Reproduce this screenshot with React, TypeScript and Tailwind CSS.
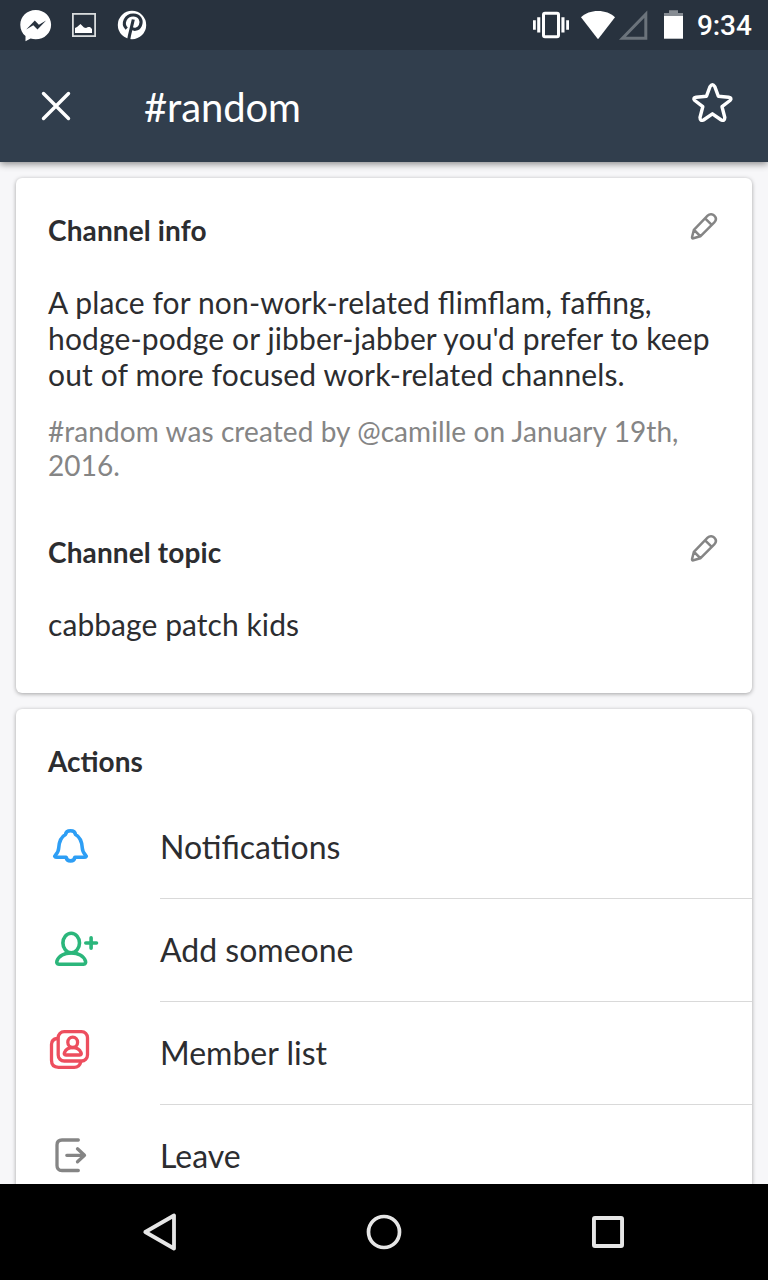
import type { ReactNode } from "react";

function StatusBar() {
  return (
    <div className="relative z-20 flex h-[50px] shrink-0 items-center bg-[#28323e] text-white">
      <svg className="h-[50px] w-[160px]" viewBox="0 0 160 50">
        <path
          fill="#fff"
          d="M35.7 10C27 10 20.3 16.4 20.3 24.7c0 4.800 2 8.700 5.200 11.400V41.300l5.100-2.700c1.600.4 3.300.7 5.100.7 8.700 0 15.400-6.400 15.400-14.600S44.400 10 35.700 10z"
        />
        <path fill="#28323e" d="M26.200 29.500l8.600-9 4.100 4.200 7.200-4.200-8.600 9-4.200-4.200z" />
        <rect x="72.900" y="13.900" width="22.200" height="22.200" fill="none" stroke="#d8dbdc" strokeWidth="1.800" />
        <path fill="#fff" d="M75 33v-5l2-1 3.500-3 3.500 3.500 2 .5 2-1h2l2 2v4z" />
        <circle cx="132" cy="25" r="14.200" fill="#fff" />
        <path
          fill="none"
          stroke="#28323e"
          strokeWidth="3.100"
          strokeLinecap="butt"
          d="M126.700 28.700c-5.200-5.100-1-13.700 6.600-13.700 6.400 0 9.200 5.500 7 10.700-2 4.500-7.500 4.600-9.200 1.700M133.300 19.500l-3.900 16.200-.7 4"
        />
      </svg>
      <svg className="ml-[370px] h-[50px] w-[160px]" viewBox="530 0 160 50">
        <rect x="543.500" y="13.200" width="15" height="23.600" rx="1.500" fill="none" stroke="#fff" strokeWidth="3" />
        <path fill="#fff" d="M537.200 17.300h3.100v15.300h-3.100zM533 20.200h2.800v9.500H533zM561.400 17.300h3.100v15.300h-3.100zM566.200 20.200h2.800v9.500h-2.800z" />
        <path fill="#fff" d="M598 39.300L581 17.300C585.500 13.200 591 11 598 11s12.500 2.200 17 6.300z" />
        <path fill="none" stroke="#6b737b" strokeWidth="3" d="M622.500 38.200h23.300V14.300z" />
        <path fill="#868c93" d="M664 16v-3h5v-2.700h9V13h5v3z" />
        <path fill="#fff" d="M664 16h19v22.700h-19z" />
      </svg>
      <span className="ml-[7px] translate-y-px font-[Roboto,sans-serif] text-[28px] leading-8 font-medium tracking-[-0.1px] whitespace-nowrap">
        9:34
      </span>
    </div>
  );
}

function Header() {
  return (
    <header className="z-10 flex h-28 shrink-0 items-center bg-[#313e4d] text-white shadow-[0_2px_7px_rgba(0,0,0,0.45)]">
      <svg className="ml-8 h-28 w-12" viewBox="32 50 48 112" fill="none" stroke="#fff" strokeWidth="3.400" strokeLinecap="round">
        <path d="M43.500 93.500l25 25M68.500 93.500l-25 25" />
      </svg>
      <h1 className="ml-16 translate-y-px text-[40px] leading-[48px] tracking-[-0.12px] whitespace-nowrap">#random</h1>
      <svg className="mr-8 ml-auto h-28 w-12" viewBox="688 50 48 112" fill="none" stroke="#fff" strokeWidth="3.400" strokeLinejoin="round">
        <path d="M710 86.600q2.400-3.700 4.800 0l3.500 9.600 10.300 1q3.900.8 1.400 3.300l-8 6.200 2.800 10.800q-.1 3.900-3.500 2.500l-8.900-6.200-8.900 6.200q-3.400 1.400-3.500-2.500l2.800-10.800-8-6.200q-2.500-2.500 1.400-3.300l10.300-1z" />
      </svg>
    </header>
  );
}

function Pencil() {
  return (
    <svg className="mr-8 h-8 w-8 -translate-y-1" viewBox="0 0 32 32" fill="none" stroke="#858585" strokeWidth="2.500" strokeLinecap="round" strokeLinejoin="round">
      <path d="M5.900 19.800L19.600 5.700c2.400-2.400 5-1.700 6.700 0 1.700 1.700 2.300 4.300 0 6.700L12.300 26.300l-6.900 2c-1.100.3-1.600-.3-1.300-1.400zM6.100 20l6.200 6.200M17.100 8.300l6.600 6.600" />
    </svg>
  );
}

function SectionHeading({ children, className = "" }: { children: ReactNode; className?: string }) {
  return (
    <div className={"flex h-[34px] items-center justify-between " + className}>
      <h2 className="text-[28px] leading-[34px] font-bold tracking-[0.12px] [font-feature-settings:'liga'_1]">{children}</h2>
      <Pencil />
    </div>
  );
}

const bell = (
  <g stroke="#2d9ef5">
    <path d="M65.500 834.500c.7-5 9.300-5 10 0 5 2.700 6.400 7.200 6.800 13.500.2 3.500 1.200 5 3 6.700 1.600 1.600.9 2.500-1.300 2.500H74.800c-.5 4.900-8 4.900-8.600 0h-9.200c-2.200 0-2.900-.9-1.300-2.500 1.800-1.700 2.800-3.200 3-6.700.4-6.300 1.800-10.800 6.800-13.500z" />
  </g>
);

const addPerson = (
  <g stroke="#2bb67b">
    <ellipse cx="71.200" cy="943" rx="8.300" ry="9.800" />
    <path d="M58.900 964.200h24.600c1.900 0 2.500-1.600 1.900-3.400-1.800-4.800-7.400-7.900-14.200-7.900s-12.400 3.100-14.200 7.900c-.6 1.800 0 3.400 1.900 3.400zM85.800 943h10.700M91.100 937.700v10.600" />
  </g>
);

const members = (
  <g stroke="#ed4e5e" strokeWidth="3.300">
    <rect x="58.200" y="1031.700" width="29.300" height="29.300" rx="6" />
    <path d="M57 1038.500c-3.600.5-5.500 2.500-5.500 6v15.800c0 4.400 2.600 7 7 7h15.700c3.500 0 5.700-1.700 6.600-5.500" />
    <ellipse cx="72.700" cy="1042.300" rx="4.900" ry="5.200" />
    <path d="M66 1055h13.600c1.800 0 2-1.200 1.400-2.400-1.300-3-4.600-4.900-8.300-4.900s-7 1.900-8.200 4.900c-.6 1.200-.3 2.400 1.500 2.400z" />
  </g>
);

const leave = (
  <g stroke="#858585" strokeWidth="3.300">
    <path d="M78.300 1140H62q-5 0-5 5v20.500q0 5 5 5h16.300M66.800 1155.300h17.500M77.500 1148.800l7 6.500-7 6.500" />
  </g>
);

const actions = [
  { label: "Notifications", icon: bell, viewBox: "48 796 64 102" },
  { label: "Add someone", icon: addPerson, viewBox: "48 899 64 102" },
  { label: "Member list", icon: members, viewBox: "48 1002 64 102" },
  { label: "Leave", icon: leave, viewBox: "48 1105 64 102" },
];

function NavBar() {
  return (
    <nav className="flex h-24 shrink-0 items-center justify-between bg-black px-[136px]">
      <svg className="size-12" viewBox="0 0 48 48" fill="none" stroke="#e6e6e6" strokeWidth="3.800" strokeLinejoin="round">
        <path d="M9.300 24L38 7.500v33z" />
      </svg>
      <svg className="size-12" viewBox="0 0 48 48" fill="none" stroke="#e6e6e6" strokeWidth="3.700">
        <circle cx="24" cy="24" r="15.500" />
      </svg>
      <svg className="size-12" viewBox="0 0 48 48" fill="none" stroke="#e6e6e6" strokeWidth="3.900">
        <rect x="9.950" y="9.950" width="28.100" height="28.100" rx="1" />
      </svg>
    </nav>
  );
}

export default function App() {
  return (
    <div className="flex h-[1280px] w-[768px] flex-col overflow-hidden bg-[#f7f7f9] font-[Lato,sans-serif] text-[#2c2d30]">
      <StatusBar />
      <Header />
      <main className="flex min-h-0 flex-1 flex-col gap-4 overflow-hidden px-4 pt-4">
        <section className="h-[515px] shrink-0 rounded-md bg-white pt-[35px] pl-8 shadow-[0_1px_4px_rgba(0,0,0,0.35)]">
          <SectionHeading>Channel info</SectionHeading>
          <p className="mt-[37px] text-[30px] leading-9 tracking-[0.135px] whitespace-nowrap [font-feature-settings:'liga'_1]">
            A place for non-work-related flimflam, faffing,
            <br />
            hodge-podge or jibber-jabber you'd prefer to keep
            <br />
            out of more focused work-related channels.
          </p>
          <p className="mt-[22px] text-[28px] leading-[34px] tracking-[0.08px] whitespace-nowrap text-[#858585] [font-feature-settings:'liga'_1]">
            #random was created by @camille on January 19th,
            <br />
            2016.
          </p>
          <SectionHeading className="mt-[53px]">Channel topic</SectionHeading>
          <p className="mt-[37px] text-[30px] leading-9 tracking-[0.07px]">cabbage patch kids</p>
        </section>
        <section className="shrink-0 rounded-md bg-white pt-[35px] pl-8 shadow-[0_1px_4px_rgba(0,0,0,0.35)]">
          <h2 className="text-[28px] leading-[34px] font-bold">Actions</h2>
          <ul className="mt-[18px]">
            {actions.map((a) => (
              <li key={a.label} className="flex h-[103px]">
                <svg className="mr-12 h-[102px] w-16 shrink-0" viewBox={a.viewBox} fill="none" strokeWidth="3.600" strokeLinecap="round" strokeLinejoin="round">
                  {a.icon}
                </svg>
                <span className="flex flex-1 items-center border-b border-[#d9d9d9] text-[32px] leading-[38px]">{a.label}</span>
              </li>
            ))}
          </ul>
        </section>
      </main>
      <NavBar />
    </div>
  );
}
